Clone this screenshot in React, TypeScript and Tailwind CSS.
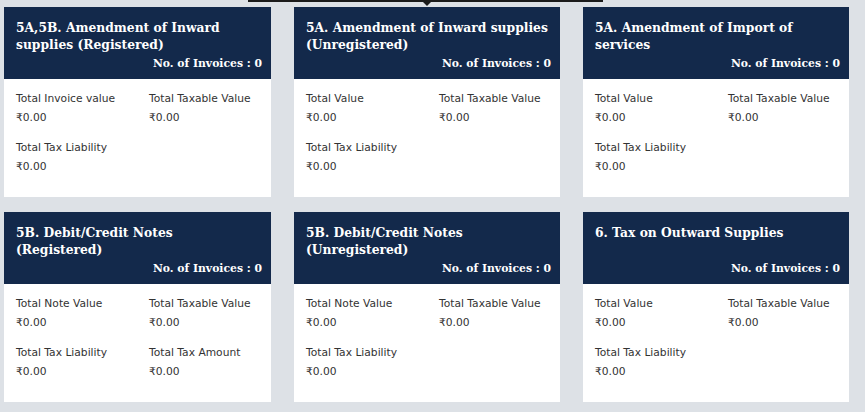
import React from "react";

type Field = { label: string; value: string };

type Section = {
  title: string;
  invoices: number;
  fields: Field[];
};

const SECTIONS: Section[] = [
  {
    title: "5A,5B. Amendment of Inward supplies (Registered)",
    invoices: 0,
    fields: [
      { label: "Total Invoice value", value: "₹0.00" },
      { label: "Total Taxable Value", value: "₹0.00" },
      { label: "Total Tax Liability", value: "₹0.00" },
    ],
  },
  {
    title: "5A. Amendment of Inward supplies (Unregistered)",
    invoices: 0,
    fields: [
      { label: "Total Value", value: "₹0.00" },
      { label: "Total Taxable Value", value: "₹0.00" },
      { label: "Total Tax Liability", value: "₹0.00" },
    ],
  },
  {
    title: "5A. Amendment of Import of services",
    invoices: 0,
    fields: [
      { label: "Total Value", value: "₹0.00" },
      { label: "Total Taxable Value", value: "₹0.00" },
      { label: "Total Tax Liability", value: "₹0.00" },
    ],
  },
  {
    title: "5B. Debit/Credit Notes (Registered)",
    invoices: 0,
    fields: [
      { label: "Total Note Value", value: "₹0.00" },
      { label: "Total Taxable Value", value: "₹0.00" },
      { label: "Total Tax Liability", value: "₹0.00" },
      { label: "Total Tax Amount", value: "₹0.00" },
    ],
  },
  {
    title: "5B. Debit/Credit Notes (Unregistered)",
    invoices: 0,
    fields: [
      { label: "Total Note Value", value: "₹0.00" },
      { label: "Total Taxable Value", value: "₹0.00" },
      { label: "Total Tax Liability", value: "₹0.00" },
    ],
  },
  {
    title: "6. Tax on Outward Supplies",
    invoices: 0,
    fields: [
      { label: "Total Value", value: "₹0.00" },
      { label: "Total Taxable Value", value: "₹0.00" },
      { label: "Total Tax Liability", value: "₹0.00" },
    ],
  },
];

function SummaryCard({ section }: { section: Section }) {
  return (
    <div className="flex h-[190px] flex-col bg-white">
      <div className="flex h-[72px] flex-col justify-between bg-[#13294b] pb-[8px] pl-[12px] pr-[9px] pt-[12px] text-white">
        <h3 className="font-['DejaVu_Serif',serif] text-[12.3px] font-bold leading-[17px]">
          {section.title}
        </h3>
        <div className="text-right font-['DejaVu_Serif',serif] text-[10.8px] font-bold leading-[14px]">
          No. of Invoices : {section.invoices}
        </div>
      </div>
      <div className="grid grid-cols-[133px_1fr] gap-y-[11px] px-[12px] pt-[10px] font-['DejaVu_Sans',sans-serif] text-[10.7px] text-[#333]">
        {section.fields.map((f) => (
          <div key={f.label}>
            <div className="leading-[19px]">{f.label}</div>
            <div className="leading-[19px]">{f.value}</div>
          </div>
        ))}
      </div>
    </div>
  );
}

export default function App() {
  return (
    <div className="relative min-h-[412px] w-[865px] bg-[#dde1e6] pb-[10px] pl-[4px] pt-[7px]">
      {/* popover edge coming down from above */}
      <div className="absolute left-[248px] top-0 h-[2px] w-[355px] bg-[#1b1b1b]" />
      <div className="absolute left-[423px] top-[2px] h-0 w-0 border-x-[4px] border-t-[4px] border-x-transparent border-t-[#1b1b1b]" />

      <div className="grid grid-cols-[267px_266px_266px] gap-x-[23px] gap-y-[15px]">
        {SECTIONS.map((s) => (
          <SummaryCard key={s.title} section={s} />
        ))}
      </div>
    </div>
  );
}
